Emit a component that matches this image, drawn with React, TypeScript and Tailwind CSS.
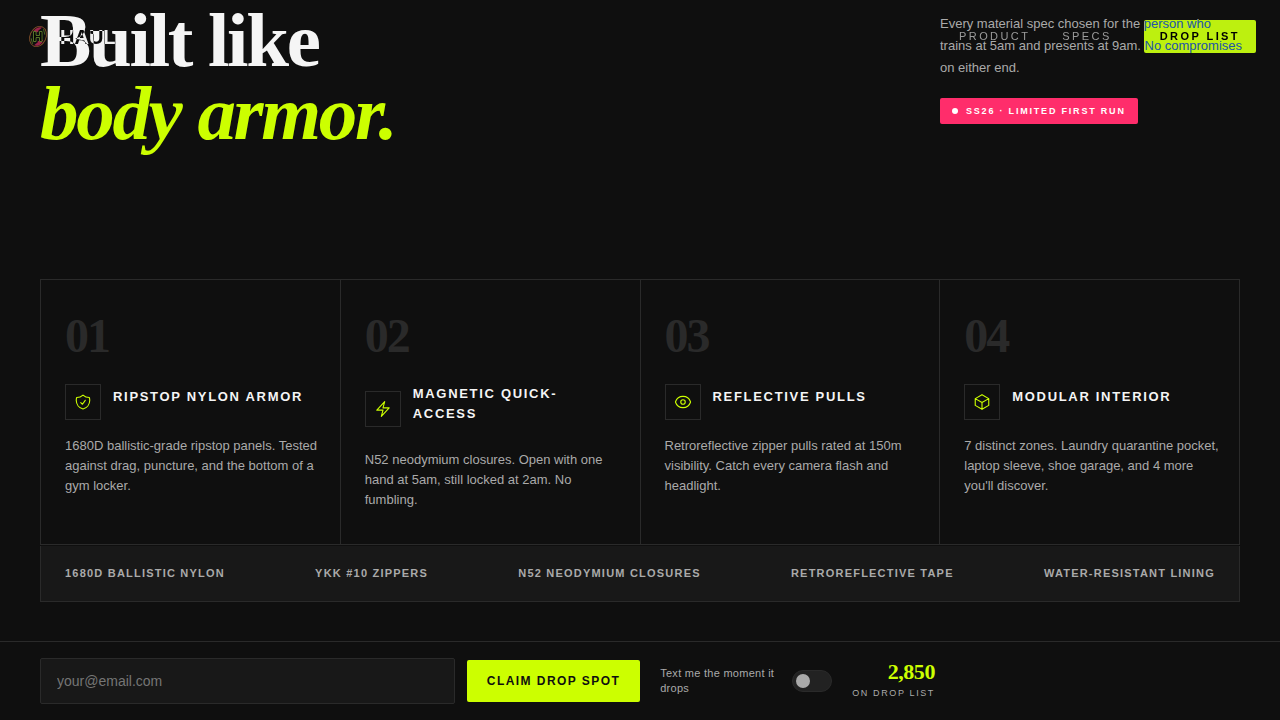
import { useState } from "react";
import type { ReactNode } from "react";

const iconProps = {
  width: 18,
  height: 18,
  viewBox: "0 0 24 24",
  fill: "none",
  stroke: "currentColor",
  strokeWidth: 1.5,
  strokeLinecap: "round",
  strokeLinejoin: "round",
  "aria-hidden": true,
} as const;

const ShieldIcon = () => (
  <svg {...iconProps}>
    <path d="M9 12.75 11.25 15 15 9.75m-3-7.036A11.959 11.959 0 0 1 3.598 6 11.99 11.99 0 0 0 3 9.749c0 5.592 3.824 10.29 9 11.623 5.176-1.332 9-6.03 9-11.622 0-1.31-.21-2.571-.598-3.751h-.152c-3.196 0-6.1-1.248-8.25-3.285Z" />
  </svg>
);

const BoltIcon = () => (
  <svg {...iconProps}>
    <path d="m3.75 13.5 10.5-11.25L12 10.5h8.25L9.75 21.75 12 13.5H3.75Z" />
  </svg>
);

const EyeIcon = () => (
  <svg {...iconProps}>
    <path d="M2.036 12.322a1.012 1.012 0 0 1 0-.639C3.423 7.51 7.36 4.5 12 4.5c4.638 0 8.573 3.007 9.963 7.178.07.207.07.431 0 .639C20.577 16.49 16.64 19.5 12 19.5c-4.638 0-8.573-3.007-9.963-7.178Z" />
    <path d="M15 12a3 3 0 1 1-6 0 3 3 0 0 1 6 0Z" />
  </svg>
);

const BoxIcon = () => (
  <svg {...iconProps}>
    <path d="m21 7.5-9-5.25L3 7.5m18 0-9 5.25m9-5.25v9l-9 5.25M3 7.5l9 5.25M3 7.5v9l9 5.25m0-9v9" />
  </svg>
);

const Emblem = () => (
  <svg width="28" height="28" viewBox="0 0 28 28" fill="none" aria-hidden="true">
    <g transform="rotate(24 14 13.5)">
      <ellipse cx="14" cy="13.5" rx="8" ry="10.5" stroke="#94603a" strokeWidth="0.9" />
      <path d="M7.500 10.500C8.500 6 11 4 14 3.800L11.500 9z" fill="#a83258" />
      <path d="M20.500 16.500C19.500 21 17 23 14 23.200L16.500 18z" fill="#a83258" />
      <path d="M8 12L12 8.500M20 15L16 18.500" stroke="#a83258" strokeWidth="1.2" />
      <path d="M16 4.500L19.500 9M12 22.500L8.500 18" stroke="#5c7a34" strokeWidth="0.9" />
    </g>
    <path
      d="M9.500 8.500h2.500v4h3.500v-4h2.500v10h-2.500v-4h-3.500v4h-2.500z"
      fill="#0a0a0a"
      stroke="#6f8f3c"
      strokeWidth="0.9"
    />
  </svg>
);

type Feature = { number: string; title: string; text: string; icon: ReactNode };

const features: Feature[] = [
  {
    number: "01",
    title: "Ripstop Nylon Armor",
    text: "1680D ballistic-grade ripstop panels. Tested against drag, puncture, and the bottom of a gym locker.",
    icon: <ShieldIcon />,
  },
  {
    number: "02",
    title: "Magnetic Quick-Access",
    text: "N52 neodymium closures. Open with one hand at 5am, still locked at 2am. No fumbling.",
    icon: <BoltIcon />,
  },
  {
    number: "03",
    title: "Reflective Pulls",
    text: "Retroreflective zipper pulls rated at 150m visibility. Catch every camera flash and headlight.",
    icon: <EyeIcon />,
  },
  {
    number: "04",
    title: "Modular Interior",
    text: "7 distinct zones. Laundry quarantine pocket, laptop sleeve, shoe garage, and 4 more you'll discover.",
    icon: <BoxIcon />,
  },
];

const materials = [
  "1680D Ballistic Nylon",
  "YKK #10 Zippers",
  "N52 Neodymium Closures",
  "Retroreflective Tape",
  "Water-Resistant Lining",
];

function Nav() {
  return (
    <nav className="fixed inset-x-0 top-0 z-20 flex items-center justify-between px-6 py-5 mix-blend-difference">
      <a href="#top" className="flex items-center gap-2 text-xl leading-5 font-bold text-white">
        <Emblem />
        HAUL
      </a>
      <div className="flex items-center gap-8 text-[11px] leading-[17px] tracking-[0.22em] text-[#aaaaaa] uppercase">
        <a href="#product">Product</a>
        <a href="#specs">Specs</a>
        <a href="#drop" className="rounded-xs bg-[#ccff00] px-4 py-2 font-bold text-[#0f0f0f]">
          Drop List
        </a>
      </div>
    </nav>
  );
}

function FeatureCard({ number, title, text, icon }: Feature) {
  return (
    <article className="bg-[#0f0f0f] px-6 pt-8 pb-[34px]">
      <div className="mb-6 font-['Liberation_Serif',serif] text-5xl leading-none font-bold tracking-[-0.04em] text-[#2a2a2a]">
        {number}
      </div>
      <div className="mb-4 flex items-center gap-3">
        <div className="flex size-9 shrink-0 items-center justify-center border border-[#2a2a2a] text-[#ccff00]">
          {icon}
        </div>
        <h3 className="mb-[10px] text-[13px] leading-5 font-bold tracking-[0.13em] text-[#f5f5f5] uppercase">
          {title}
        </h3>
      </div>
      <p className="-mr-2 text-[13px] leading-5 text-[#aaaaaa]">{text}</p>
    </article>
  );
}

function DropBar() {
  const [notify, setNotify] = useState(false);
  return (
    <footer id="drop" className="sticky bottom-0 border-t border-[#2a2a2a] bg-[#0f0f0f]">
      <form
        className="flex max-w-[975px] items-center px-10 py-4"
        onSubmit={(event) => event.preventDefault()}
      >
        <input
          type="email"
          aria-label="Email address"
          placeholder="your@email.com"
          className="h-[46px] min-w-0 flex-1 rounded-xs border border-[#2a2a2a] bg-[#181818] px-4 text-sm text-[#f5f5f5] placeholder:text-[#757575]"
        />
        <button
          type="submit"
          className="ml-3 h-[42px] shrink-0 rounded-xs bg-[#ccff00] px-5 text-xs font-bold tracking-[0.12em] text-[#0f0f0f] uppercase"
        >
          Claim Drop Spot
        </button>
        <label
          htmlFor="notify"
          className="ml-5 w-30 shrink-0 text-[11px] leading-[15px] tracking-wide text-[#aaaaaa]"
        >
          Text me the moment it drops
        </label>
        <input
          id="notify"
          type="checkbox"
          role="switch"
          checked={notify}
          onChange={(event) => setNotify(event.target.checked)}
          className="ml-3 flex h-[22px] w-10 shrink-0 appearance-none items-center rounded-full border border-[#2a2a2a] bg-[#222222] px-[3px] before:size-[14px] before:rounded-full before:bg-[#aaaaaa] checked:justify-end checked:before:bg-[#ccff00]"
        />
        <div className="ml-5 shrink-0 text-right">
          <div className="font-['Liberation_Serif',serif] text-[22px] leading-[22px] font-bold tracking-[-0.02em] text-[#ccff00]">
            2,850
          </div>
          <div className="mt-[2px] text-[9px] leading-4 tracking-[0.18em] text-[#aaaaaa] uppercase">
            on drop list
          </div>
        </div>
      </form>
    </footer>
  );
}

export default function App() {
  return (
    <div
      id="top"
      className="flex min-h-screen flex-col bg-[#0f0f0f] font-['Liberation_Sans',sans-serif] text-[#f5f5f5]"
    >
      <Nav />
      <main className="flex-1 px-10 pt-1 pb-6">
        <section id="product" className="flex items-start justify-between pb-[129px]">
          <h1 className="font-['Liberation_Serif',serif] text-[77px] leading-[73px] font-bold tracking-[-0.03em]">
            Built like
            <br />
            <em className="text-[#ccff00]">body armor.</em>
          </h1>
          <div className="w-[300px] pt-[9px]">
            <p className="-mr-1 text-[13px] leading-[22px] text-[#aaaaaa]">
              Every material spec chosen for the person who trains at 5am and presents at 9am. No
              compromises on either end.
            </p>
            <div className="mt-[19px] inline-flex items-center gap-2 rounded-xs bg-[#ff2d6b] px-3 py-[6px] text-[9px] leading-[14px] font-bold tracking-[0.2em] text-white uppercase">
              <span className="size-[6px] rounded-full bg-white" />
              SS26 · Limited First Run
            </div>
          </div>
        </section>
        <section id="specs">
          <div className="grid grid-cols-4 gap-px border border-[#2a2a2a] bg-[#2a2a2a]">
            {features.map((feature) => (
              <FeatureCard key={feature.number} {...feature} />
            ))}
          </div>
          <ul className="mt-px flex flex-wrap justify-between border border-t-0 border-[#2a2a2a] bg-[#181818] px-6 py-5 text-[11px] leading-[15px] font-bold tracking-[0.11em] text-[#aaaaaa] uppercase">
            {materials.map((material) => (
              <li key={material}>{material}</li>
            ))}
          </ul>
        </section>
      </main>
      <DropBar />
    </div>
  );
}
